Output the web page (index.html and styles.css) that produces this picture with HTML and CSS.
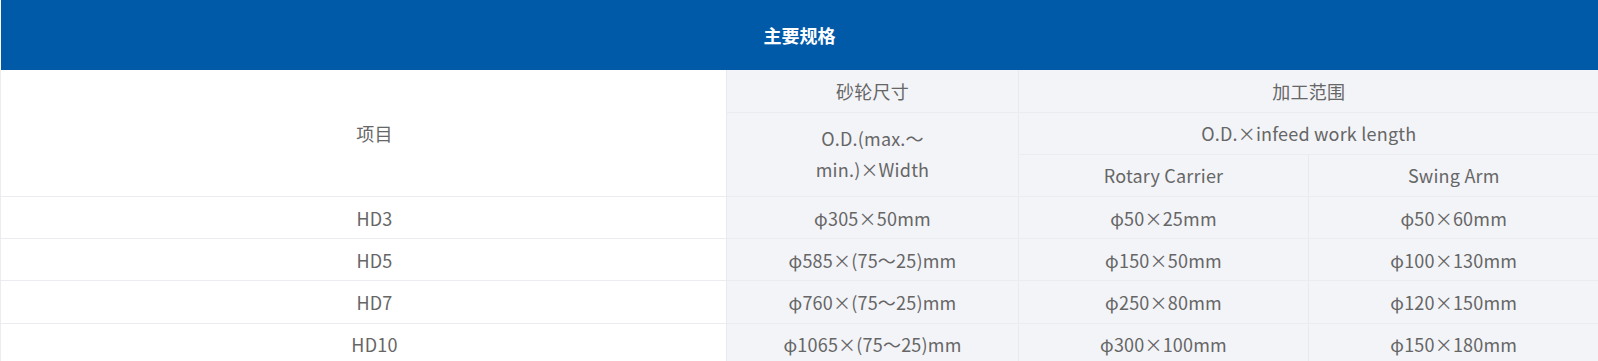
FILE: index.html
```html
<!DOCTYPE html>
<html lang="zh-CN">
<head>
<meta charset="utf-8">
<title>主要规格</title>
<link rel="stylesheet" href="styles.css">
</head>
<body>
<table class="spec">
  <colgroup>
    <col class="c1"><col class="c2"><col class="c3"><col class="c4">
  </colgroup>
  <thead>
    <tr class="title-row"><th colspan="4">主要规格</th></tr>
  </thead>
  <tbody>
    <tr>
      <td rowspan="3" class="item">项目</td>
      <td class="alt">砂轮尺寸</td>
      <td class="alt" colspan="2">加工范围</td>
    </tr>
    <tr>
      <td class="alt two" rowspan="2">O.D.(max.～<br>min.)×Width</td>
      <td class="alt" colspan="2">O.D.×infeed work length</td>
    </tr>
    <tr>
      <td class="alt">Rotary Carrier</td>
      <td class="alt">Swing Arm</td>
    </tr>
    <tr>
      <td class="item">HD3</td>
      <td class="alt">φ305×50mm</td>
      <td class="alt">φ50×25mm</td>
      <td class="alt">φ50×60mm</td>
    </tr>
    <tr>
      <td class="item">HD5</td>
      <td class="alt">φ585×(75～25)mm</td>
      <td class="alt">φ150×50mm</td>
      <td class="alt">φ100×130mm</td>
    </tr>
    <tr>
      <td class="item">HD7</td>
      <td class="alt">φ760×(75～25)mm</td>
      <td class="alt">φ250×80mm</td>
      <td class="alt">φ120×150mm</td>
    </tr>
    <tr>
      <td class="item">HD10</td>
      <td class="alt">φ1065×(75～25)mm</td>
      <td class="alt">φ300×100mm</td>
      <td class="alt">φ150×180mm</td>
    </tr>
  </tbody>
</table>
</body>
</html>
```

FILE: styles.css
```css
html, body {
  margin: 0;
  padding: 0;
  background: #ffffff;
}

.spec {
  width: 1598px;
  border-collapse: collapse;
  table-layout: fixed;
  font-family: "Noto Sans CJK SC", "Noto Sans", sans-serif;
  font-size: 18px;
  letter-spacing: 0.2px;
  color: #666666;
}

.c1 { width: 726px; }
.c2 { width: 292px; }
.c3 { width: 290px; }
.c4 { width: 290px; }

.title-row th {
  height: 70px;
  padding: 0;
  background: #005aa8;
  color: #ffffff;
  font-weight: bold;
  font-size: 18px;
  letter-spacing: 0;
  text-align: center;
  vertical-align: middle;
  border: none;
}

.spec td {
  height: 42.2px;
  padding: 0 10px;
  line-height: 30px;
  text-align: center;
  vertical-align: middle;
  border-bottom: 1px solid #ebecef;
  border-left: 1px solid #ebecef;
  box-sizing: border-box;
}

.spec td.item {
  background: #ffffff;
  padding: 0 10px 0 32px;
  border-left: 1px solid #ececec;
}

.spec td.alt {
  background: #f3f4f8;
  border-left: 1px solid #e9eaee;
}

.spec td.two {
  line-height: 31px;
}
```
